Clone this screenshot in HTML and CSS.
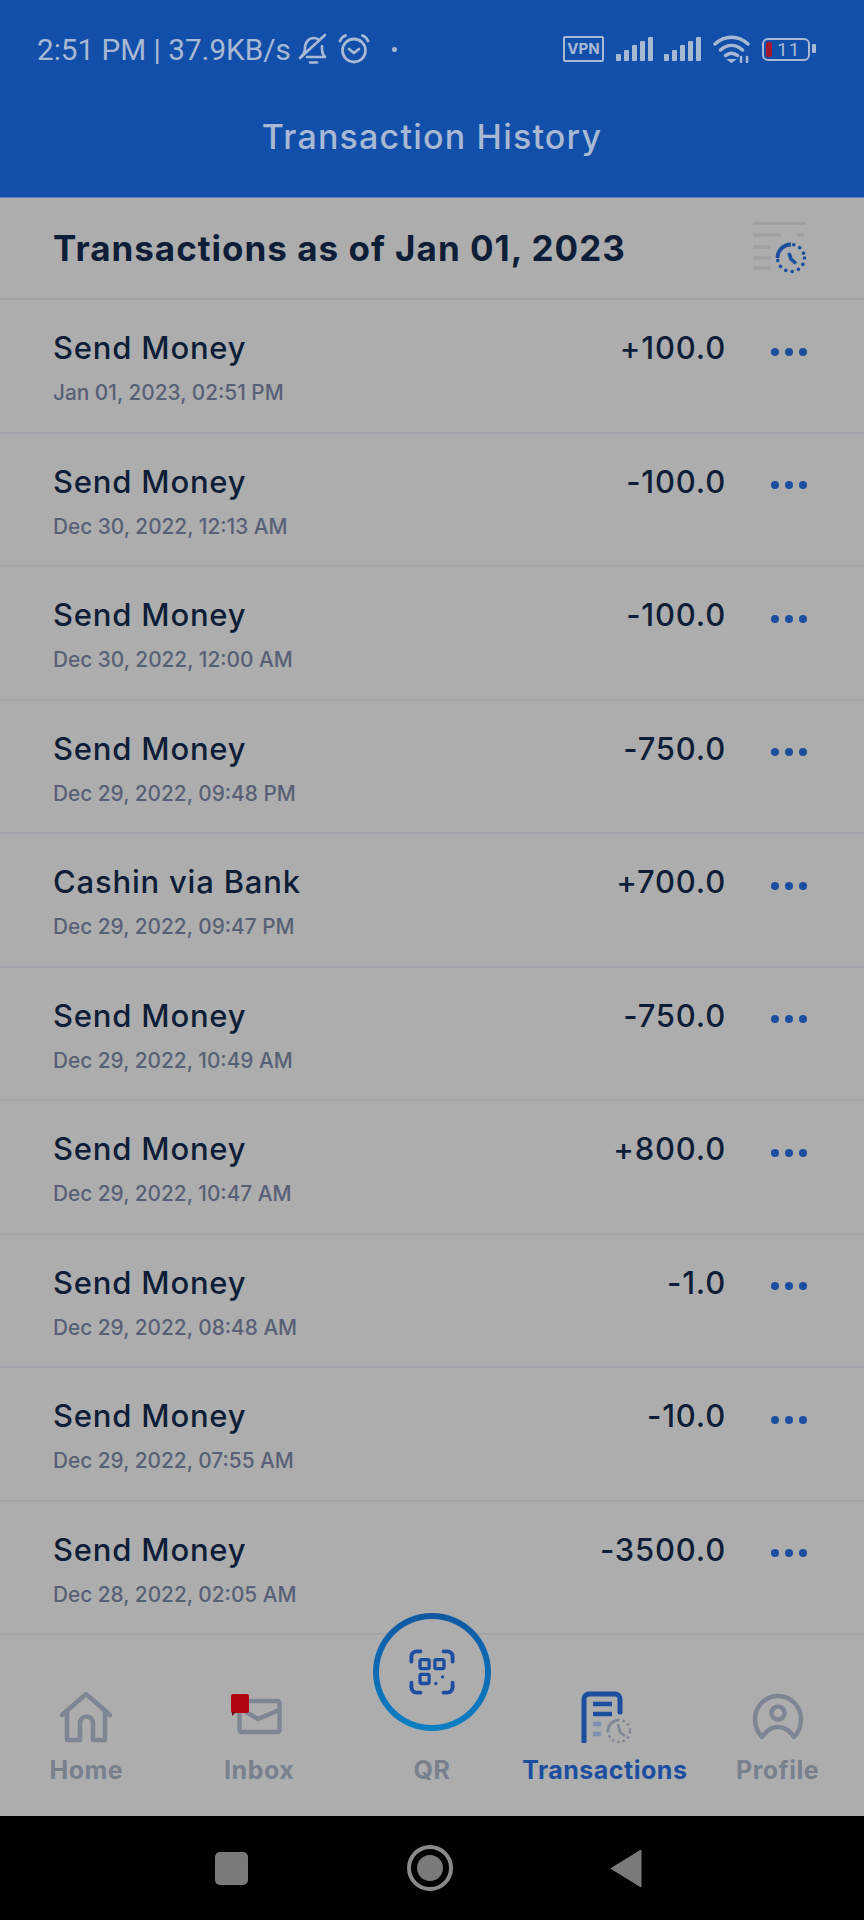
FILE: index.html
```html
<!DOCTYPE html>
<html lang="en">
<head>
  <meta charset="UTF-8">
  <meta name="viewport" content="width=device-width, initial-scale=1.0">
  <title>Transaction History</title>
  <link rel="stylesheet" href="styles.css">
</head>
<body>
  <header class="top">
    <div class="status">
      <div class="status-left">
        <span class="clock">2:51 PM | 37.9KB/s</span>
        <svg class="ic-bell" viewBox="0 0 30 32" fill="none" stroke="currentColor" stroke-width="2.6" stroke-linecap="round" stroke-linejoin="round">
          <path d="M3 24c2-2 4-4 4-9 0-6 4-10 9-10 2 0 4 .8 5.500 2.200M24 13v3c0 4 1 6 3 8H9"/>
          <path d="M2 25 27 2"/>
          <path d="M12 29.500h7"/>
        </svg>
        <svg class="ic-alarm" viewBox="0 0 32 30" fill="none" stroke="currentColor" stroke-width="2.800" stroke-linecap="round" stroke-linejoin="round">
          <circle cx="16" cy="16.500" r="11.500"/>
          <path d="M11 15l5 4 5-4"/>
          <path d="M2 7c1-2.500 3-4.500 5.500-5.500M30 7c-1-2.500-3-4.500-5.500-5.500"/>
        </svg>
        <span class="dot-small"></span>
      </div>
      <div class="status-right">
        <span class="vpn">VPN</span>
        <svg class="ic-signal" viewBox="0 0 38 24" fill="currentColor">
          <rect x="0" y="17" width="5" height="7" rx="1"/><rect x="8" y="13" width="5" height="11" rx="1"/><rect x="16" y="8" width="5" height="16" rx="1"/><rect x="24" y="4" width="5" height="20" rx="1"/><rect x="32" y="0" width="5" height="24" rx="1"/>
        </svg>
        <svg class="ic-signal" viewBox="0 0 38 24" fill="currentColor">
          <rect x="0" y="17" width="5" height="7" rx="1"/><rect x="8" y="13" width="5" height="11" rx="1"/><rect x="16" y="8" width="5" height="16" rx="1"/><rect x="24" y="4" width="5" height="20" rx="1"/><rect x="32" y="0" width="5" height="24" rx="1"/>
        </svg>
        <svg class="ic-wifi" viewBox="0 0 37 28" fill="none" stroke="currentColor" stroke-width="3.500" stroke-linecap="round">
          <path d="M2 9c10-9 23-9 33 0"/>
          <path d="M7.500 15c7-6 15-6 22 0"/>
          <path d="M12.500 20.500c4-3 8-3 12 0"/>
          <path d="M16 25l2.500 2 2.500-2z" fill="currentColor" stroke-width="2"/>
          <path d="M28 27v-5M34 27v-5" stroke-width="2.500"/>
        </svg>
        <span class="battery"><span class="battery-low"></span><span class="battery-num">11</span></span>
      </div>
    </div>
    <h1 class="title">Transaction History</h1>
  </header>

  <section class="as-of">
    <h2>Transactions as of Jan 01, 2023</h2>
    <svg class="ic-filter" viewBox="0 0 54 52" fill="none">
      <path d="M0 1h53M0 13h28M44 13h7M0 25h18M0 36h18M0 46h18" stroke="#9fa0a2" stroke-width="3.500"/>
      <circle cx="38" cy="36" r="13.500" stroke="#1c4ea0" stroke-width="3.500" stroke-linecap="round" stroke-dasharray="0.1 6.500"/>
      <path d="M24.500 36a13.500 13.500 0 0 1 13.500-13.500" stroke="#1c4ea0" stroke-width="3.800"/>
      <path d="M36 31l2 6 5 4.500" stroke="#1c4ea0" stroke-width="3.500"/>
    </svg>
  </section>

  <main class="list">
    <div class="row">
      <div class="info"><div class="name">Send Money</div><div class="date">Jan 01, 2023, 02:51 PM</div></div>
      <div class="amount">+100.0</div>
      <div class="more"><i></i><i></i><i></i></div>
    </div>
    <div class="row">
      <div class="info"><div class="name">Send Money</div><div class="date">Dec 30, 2022, 12:13 AM</div></div>
      <div class="amount">-100.0</div>
      <div class="more"><i></i><i></i><i></i></div>
    </div>
    <div class="row">
      <div class="info"><div class="name">Send Money</div><div class="date">Dec 30, 2022, 12:00 AM</div></div>
      <div class="amount">-100.0</div>
      <div class="more"><i></i><i></i><i></i></div>
    </div>
    <div class="row">
      <div class="info"><div class="name">Send Money</div><div class="date">Dec 29, 2022, 09:48 PM</div></div>
      <div class="amount">-750.0</div>
      <div class="more"><i></i><i></i><i></i></div>
    </div>
    <div class="row">
      <div class="info"><div class="name">Cashin via Bank</div><div class="date">Dec 29, 2022, 09:47 PM</div></div>
      <div class="amount">+700.0</div>
      <div class="more"><i></i><i></i><i></i></div>
    </div>
    <div class="row">
      <div class="info"><div class="name">Send Money</div><div class="date">Dec 29, 2022, 10:49 AM</div></div>
      <div class="amount">-750.0</div>
      <div class="more"><i></i><i></i><i></i></div>
    </div>
    <div class="row">
      <div class="info"><div class="name">Send Money</div><div class="date">Dec 29, 2022, 10:47 AM</div></div>
      <div class="amount">+800.0</div>
      <div class="more"><i></i><i></i><i></i></div>
    </div>
    <div class="row">
      <div class="info"><div class="name">Send Money</div><div class="date">Dec 29, 2022, 08:48 AM</div></div>
      <div class="amount">-1.0</div>
      <div class="more"><i></i><i></i><i></i></div>
    </div>
    <div class="row">
      <div class="info"><div class="name">Send Money</div><div class="date">Dec 29, 2022, 07:55 AM</div></div>
      <div class="amount">-10.0</div>
      <div class="more"><i></i><i></i><i></i></div>
    </div>
    <div class="row">
      <div class="info"><div class="name">Send Money</div><div class="date">Dec 28, 2022, 02:05 AM</div></div>
      <div class="amount">-3500.0</div>
      <div class="more"><i></i><i></i><i></i></div>
    </div>
  </main>

  <nav class="tabs">
    <div class="tab">
      <svg class="tab-icon" viewBox="0 0 52 52" fill="none" stroke="#7e8694" stroke-width="4.500" stroke-linejoin="round" stroke-linecap="round">
        <path d="M2 24 26 3l24 21"/>
        <path d="M7 20v29h13V32a6.500 6.500 0 0 1 13 0v17h12V20"/>
      </svg>
      <span>Home</span>
    </div>
    <div class="tab">
      <span class="inbox-icon">
        <svg class="tab-icon" viewBox="0 0 52 52" fill="none" stroke="#7e8694" stroke-width="4.500" stroke-linejoin="round" stroke-linecap="round">
          <rect x="6.500" y="10" width="40" height="31" rx="2"/>
          <path d="M13 21l12 7 21-9"/>
        </svg>
        <b class="badge"></b>
      </span>
      <span>Inbox</span>
    </div>
    <div class="tab tab-qr">
      <div class="qr-ring">
        <svg class="qr-icon" viewBox="0 0 48 48" fill="none" stroke="#1c4ea0" stroke-width="3.400" stroke-linecap="round">
          <path d="M12 2.500H8a5.500 5.500 0 0 0-5.500 5.500v5M36 2.500h4a5.500 5.500 0 0 1 5.500 5.500v5" stroke-width="4"/>
          <path d="M12 45.500H8a5.500 5.500 0 0 1-5.500-5.500v-5M36 45.500h4a5.500 5.500 0 0 0 5.500-5.500v-5" stroke-width="4"/>
          <rect x="11.500" y="11" width="9.500" height="9.500" rx="1.500"/>
          <rect x="27" y="11" width="9.500" height="9.500" rx="1.500"/>
          <rect x="11.500" y="26.500" width="9.500" height="9.500" rx="1.500"/>
          <path d="M28 36v.1M35 29v.1"/>
        </svg>
      </div>
      <span>QR</span>
    </div>
    <div class="tab tab-active">
      <svg class="tab-icon" viewBox="0 0 52 52" fill="none">
        <path d="M5 51V8a5 5 0 0 1 5-5h26a5 5 0 0 1 5 5v13" stroke="#1c4ea0" stroke-width="5" stroke-linecap="round"/>
        <path d="M14 13h19M14 23h19" stroke="#1c4ea0" stroke-width="4.500"/>
        <path d="M14 33h8M14 43h8" stroke="#7e8fb0" stroke-width="4.500"/>
        <circle cx="40" cy="40" r="11" stroke="#7e8694" stroke-width="2.500" stroke-dasharray="2.500 3"/>
        <path d="M29 40a11 11 0 0 1 11-11" stroke="#7e8694" stroke-width="2.500"/>
        <path d="M39 33l2 8 5 4" stroke="#7e8694" stroke-width="2.500"/>
      </svg>
      <span>Transactions</span>
    </div>
    <div class="tab">
      <svg class="tab-icon" viewBox="0 0 52 52" fill="none" stroke="#7e8694" stroke-width="4.500" stroke-linejoin="round">
        <path d="M10 46C5 41 3 34 3 28a23 23 0 0 1 46 0c0 6-2 13-7 18-4-6-9-10-16-10S14 40 10 46z"/>
        <circle cx="26" cy="22" r="6.500"/>
      </svg>
      <span>Profile</span>
    </div>
  </nav>

  <footer class="softkeys">
    <span class="key-square"></span>
    <span class="key-circle"><i></i></span>
    <svg class="key-back" viewBox="0 0 32 39"><path d="M1 19.500 31 1v37z" fill="#7a7a7a" stroke="#7a7a7a" stroke-width="1" stroke-linejoin="round"/></svg>
  </footer>
</body>
</html>
```

FILE: styles.css
```css
* {
  box-sizing: border-box;
}
html, body {
  margin: 0;
  padding: 0;
}
body {
  width: 864px;
  height: 1920px;
  overflow: hidden;
  display: flex;
  flex-direction: column;
  font-family: Inter, "Noto Sans", sans-serif;
  background-color: #adadad;
  color: #0e1e38;
}

/* blue top area */
.top {
  height: 198px;
  flex: none;
  background-color: #124faa;
  color: #a9b8d3;
  border-bottom: 1px solid #5f83bb;
}
.status {
  height: 96px;
  padding: 2px 54px 0 37px;
  display: flex;
  align-items: center;
  justify-content: space-between;
}
.status-left, .status-right {
  display: flex;
  align-items: center;
}
.clock {
  font-family: Roboto, sans-serif;
  font-size: 29.7px;
}
.ic-bell {
  width: 30px;
  height: 32px;
  margin-left: 7px;
}
.ic-alarm {
  width: 32px;
  height: 30px;
  margin-left: 10px;
}
.dot-small {
  width: 5px;
  height: 5px;
  margin-left: 22px;
  border-radius: 50%;
  background-color: #a9b8d3;
}
.vpn {
  width: 41px;
  height: 26px;
  border: 2px solid #a9b8d3;
  border-radius: 2px;
  font-size: 15px;
  font-weight: 700;
  line-height: 22px;
  text-align: center;
}
.ic-signal {
  width: 38px;
  height: 24px;
  margin-left: 12px;
}
.ic-signal + .ic-signal {
  margin-left: 10px;
}
.ic-wifi {
  width: 37px;
  height: 28px;
  margin-left: 11px;
}
.battery {
  position: relative;
  width: 48px;
  height: 23px;
  margin-left: 12px;
  border: 2px solid #a9b8d3;
  border-radius: 6px;
  display: flex;
  align-items: center;
  padding-left: 2px;
}
.battery::after {
  content: "";
  position: absolute;
  right: -8px;
  top: 4px;
  width: 4px;
  height: 9px;
  border-radius: 1px;
  background-color: #a9b8d3;
}
.battery-low {
  width: 6px;
  height: 15px;
  border-radius: 2px;
  background-color: #a5162f;
}
.battery-num {
  margin-left: 5px;
  font-family: Roboto, sans-serif;
  font-size: 19px;
  letter-spacing: 1px;
}
.title {
  margin: 18px 0 0;
  text-align: center;
  font-size: 34px;
  font-weight: 500;
  letter-spacing: 1.2px;
  line-height: 46px;
}

/* heading under the blue area */
.as-of {
  height: 102px;
  flex: none;
  padding: 0 57px 0 53px;
  display: flex;
  align-items: center;
  justify-content: space-between;
  border-bottom: 2px solid #a2a2a4;
}
.as-of h2 {
  margin: 0;
  font-size: 35px;
  font-weight: 700;
  letter-spacing: 1px;
}
.ic-filter {
  width: 54px;
  height: 52px;
}

/* transaction rows */
.list {
  height: 1335px;
  flex: none;
  display: flex;
  flex-direction: column;
}
.row {
  flex: 1;
  padding: 27px 57px 0 53px;
  display: flex;
  align-items: flex-start;
  border-bottom: 2px solid #a3a5aa;
}
.info {
  flex: 1;
}
.name {
  font-size: 31px;
  font-weight: 500;
  letter-spacing: 0.8px;
  line-height: 42px;
}
.date {
  margin-top: 9px;
  font-size: 20.8px;
  font-weight: 500;
  color: #586076;
  line-height: 30px;
}
.amount {
  font-size: 31px;
  font-weight: 500;
  letter-spacing: 0.8px;
  line-height: 42px;
}
.more {
  width: 36px;
  height: 42px;
  margin-left: 45px;
  padding-top: 7px;
  display: flex;
  align-items: center;
  justify-content: space-between;
}
.more i {
  width: 8px;
  height: 8px;
  border-radius: 50%;
  background-color: #1c4ea0;
}

/* bottom tabs */
.tabs {
  height: 181px;
  flex: none;
  display: flex;
  position: relative;
}
.tab {
  flex: 1;
  display: flex;
  flex-direction: column;
  align-items: center;
  justify-content: flex-end;
  padding-bottom: 31px;
  gap: 13px;
  font-size: 25px;
  font-weight: 700;
  letter-spacing: 0.5px;
  color: #78808e;
  line-height: 29px;
}
.tab-icon {
  width: 52px;
  height: 52px;
}
.tab-active {
  color: #1c4ea0;
}
.inbox-icon {
  position: relative;
  display: block;
  width: 52px;
  height: 52px;
}
.badge {
  position: absolute;
  left: -2px;
  top: 3px;
  width: 18px;
  height: 19px;
  border-radius: 2px;
  background-color: #b1050f;
}
.badge::after {
  content: "";
  position: absolute;
  left: 1px;
  top: 18px;
  border-top: 4px solid #6d0a12;
  border-right: 4px solid transparent;
}
.qr-ring {
  position: absolute;
  top: -22px;
  left: 373px;
  width: 118px;
  height: 118px;
  border: 6px solid transparent;
  border-radius: 50%;
  background: linear-gradient(#adadad, #adadad) padding-box, linear-gradient(#0f58a3, #0d7fc4) border-box;
  display: flex;
  align-items: center;
  justify-content: center;
}
.qr-icon {
  width: 46px;
  height: 46px;
}

/* phone keys */
.softkeys {
  height: 104px;
  flex: none;
  background-color: #000;
  display: flex;
  align-items: center;
}
.key-square {
  width: 33px;
  height: 33px;
  margin-left: 215px;
  border-radius: 5px;
  background-color: #7a7a7a;
}
.key-circle {
  width: 46px;
  height: 46px;
  margin-left: 159px;
  border: 4px solid #8a8a8a;
  border-radius: 50%;
  display: flex;
  align-items: center;
  justify-content: center;
}
.key-circle i {
  width: 26px;
  height: 26px;
  border-radius: 50%;
  background-color: #7a7a7a;
}
.key-back {
  width: 32px;
  height: 39px;
  margin-left: 157px;
}
```
